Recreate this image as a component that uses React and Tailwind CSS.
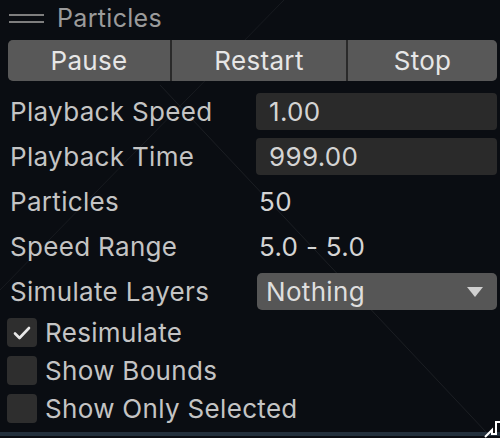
import React from 'react';

const font = { fontFamily: 'Inter, "Noto Sans", sans-serif' };

const Checkbox = ({ checked }) => (
    <div className="w-[30px] h-[29px] rounded-[4px] bg-[#2e2e2e] flex items-center justify-center">
        {checked && (
            <svg width="20" height="16" viewBox="0 0 20 16">
                <path d="M3 8.5 L7.5 13 L17 3" fill="none" stroke="#e8e8e8" strokeWidth="2.6" strokeLinecap="round" strokeLinejoin="round" />
            </svg>
        )}
    </div>
);

const App = () => {
    return (
        <div className="relative w-[500px] h-[438px] overflow-hidden bg-[#0a0d12] text-[#c4c4c4] tracking-[0.02em]" style={font}>
            {/* faint scene lines behind the panel */}
            <svg className="absolute inset-0 pointer-events-none" width="500" height="438">
                <line x1="284" y1="0" x2="0" y2="290" stroke="#ffffff" strokeOpacity="0.06" strokeWidth="1" />
                <line x1="160" y1="85" x2="486" y2="432" stroke="#ffffff" strokeOpacity="0.07" strokeWidth="1" />
            </svg>

            <div className="relative flex flex-col">
                {/* header */}
                <div className="h-[36px] flex items-center pl-[9px]">
                    <div className="flex flex-col gap-[5px] w-[35px]">
                        <div className="h-[2px] bg-[#7e7e7e]" />
                        <div className="h-[2px] bg-[#7e7e7e]" />
                    </div>
                    <span className="ml-[13px] text-[25px] text-[#9b9b9b] leading-none">Particles</span>
                </div>

                {/* buttons */}
                <div className="mt-[4px] ml-[8px] mr-[3px] h-[41px] flex rounded-[5px] overflow-hidden bg-[#2a2a2a] gap-[2px] text-[26px] text-[#e6e6e6]">
                    <div className="w-[162px] bg-[#585858] flex items-center justify-center">Pause</div>
                    <div className="w-[174px] bg-[#585858] flex items-center justify-center">Restart</div>
                    <div className="flex-1 bg-[#585858] flex items-center justify-center">Stop</div>
                </div>

                {/* fields */}
                <div className="mt-[12px] flex flex-col text-[26px]">
                    <div className="h-[37px] flex items-center">
                        <span className="w-[256px] pl-[10px]">Playback Speed</span>
                        <div className="flex-1 mr-[3px] h-full rounded-[4px] bg-[#2a2a2a] flex items-center pl-[13px] text-[#d4d4d4]">1.00</div>
                    </div>
                    <div className="mt-[8px] h-[37px] flex items-center">
                        <span className="w-[256px] pl-[10px]">Playback Time</span>
                        <div className="flex-1 mr-[3px] h-full rounded-[4px] bg-[#2a2a2a] flex items-center pl-[13px] text-[#d4d4d4]">999.00</div>
                    </div>
                    <div className="mt-[8px] h-[37px] flex items-center">
                        <span className="w-[259px] pl-[10px]">Particles</span>
                        <span className="text-[#d4d4d4]">50</span>
                    </div>
                    <div className="mt-[8px] h-[37px] flex items-center">
                        <span className="w-[259px] pl-[10px]">Speed Range</span>
                        <span className="text-[#d4d4d4]">5.0 - 5.0</span>
                    </div>
                    <div className="mt-[8px] h-[37px] flex items-center">
                        <span className="w-[257px] pl-[10px]">Simulate Layers</span>
                        <div className="flex-1 mr-[3px] h-full rounded-[5px] bg-[#565656] flex items-center justify-between pl-[9px] pr-[14px] text-[#dedede]">
                            <span>Nothing</span>
                            <svg width="16" height="10" viewBox="0 0 16 10">
                                <path d="M0 0 L16 0 L8 10 Z" fill="#d0d0d0" />
                            </svg>
                        </div>
                    </div>
                </div>

                {/* toggles */}
                <div className="mt-[8px] flex flex-col gap-[9px] text-[26px] pl-[7px]">
                    <div className="h-[29px] flex items-center gap-[8px]">
                        <Checkbox checked />
                        <span>Resimulate</span>
                    </div>
                    <div className="h-[29px] flex items-center gap-[8px]">
                        <Checkbox />
                        <span>Show Bounds</span>
                    </div>
                    <div className="h-[29px] flex items-center gap-[8px]">
                        <Checkbox />
                        <span>Show Only Selected</span>
                    </div>
                </div>
            </div>

            {/* bottom bar */}
            <div className="absolute left-0 right-0 bottom-[2px] h-[4px] bg-[#23303c]" />

            {/* resize cursor */}
            <svg className="absolute right-0 bottom-0" width="16" height="20" viewBox="0 0 16 20">
                <path d="M1 19 L8 12 L8 16 L12 16 L12 4 L16 4" fill="#111" stroke="#ffffff" strokeWidth="2" />
            </svg>
        </div>
    );
};

export default App;
